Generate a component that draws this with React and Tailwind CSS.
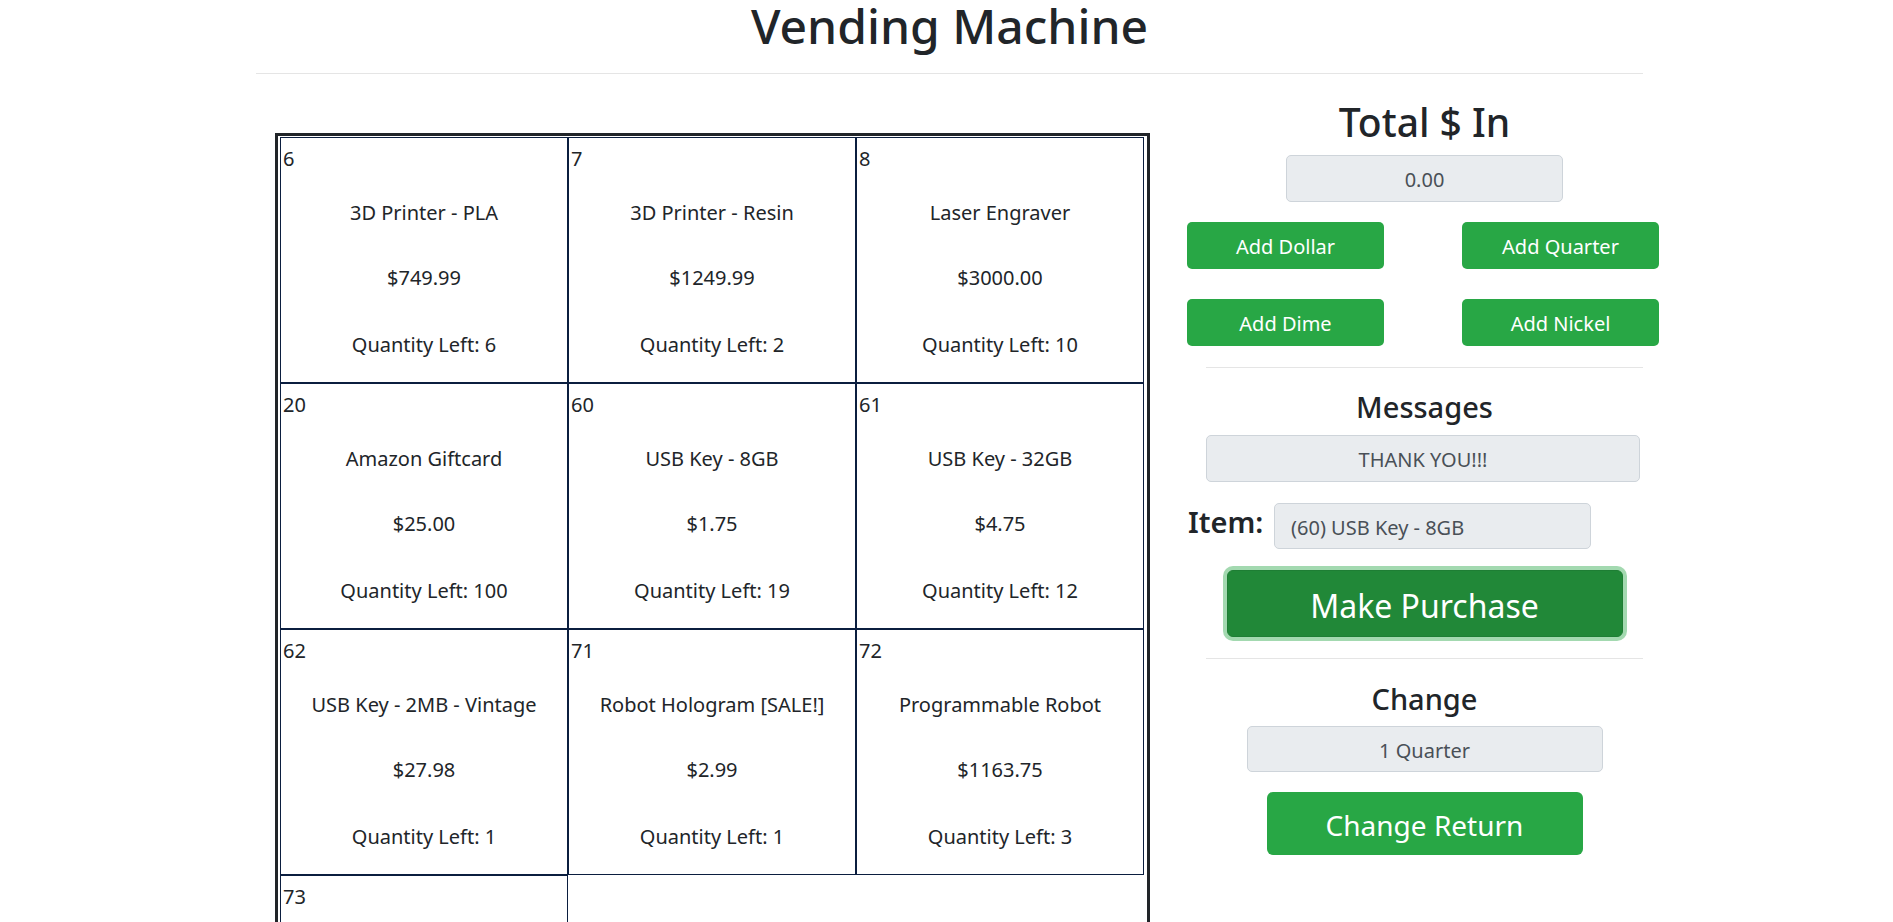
import React from 'react';

const items = [
    { id: 6, name: '3D Printer - PLA', price: '749.99', qty: 6 },
    { id: 7, name: '3D Printer - Resin', price: '1249.99', qty: 2 },
    { id: 8, name: 'Laser Engraver', price: '3000.00', qty: 10 },
    { id: 20, name: 'Amazon Giftcard', price: '25.00', qty: 100 },
    { id: 60, name: 'USB Key - 8GB', price: '1.75', qty: 19 },
    { id: 61, name: 'USB Key - 32GB', price: '4.75', qty: 12 },
    { id: 62, name: 'USB Key - 2MB - Vintage', price: '27.98', qty: 1 },
    { id: 71, name: 'Robot Hologram [SALE!]', price: '2.99', qty: 1 },
    { id: 72, name: 'Programmable Robot', price: '1163.75', qty: 3 },
    { id: 73, name: 'Robot Dog', price: '499.99', qty: 4 },
];

const ItemCell = ({ item }) => (
    <div className="w-[288px] h-[246px] border border-[#0b1e3f] flex flex-col">
        <div className="pl-[2px] mt-[6px] leading-[30px] h-[30px]">{item.id}</div>
        <div className="text-center mt-[24px] leading-[30px] h-[30px]">{item.name}</div>
        <div className="text-center mt-[35px] leading-[30px] h-[30px]">${item.price}</div>
        <div className="text-center mt-[37px] leading-[30px] h-[30px]">Quantity Left: {item.qty}</div>
    </div>
);

const ReadOnlyBox = ({ children, className = '' }) => (
    <div className={`bg-[#e9ecef] border border-[#ced4da] rounded-[5px] text-[#495057] text-[20px] pt-[3px] flex items-center ${className}`}>
        {children}
    </div>
);

const CoinButton = ({ label, className = '' }) => (
    <button className={`w-[197px] h-[47px] pt-[2px] rounded-[5px] bg-[#28a745] text-white text-[20px] ${className}`}>
        {label}
    </button>
);

export default function App() {
    return (
        <div className="min-h-screen bg-white text-[#212529] text-[20px] font-['Noto_Sans',sans-serif]">
            {/* Header */}
            <div className="ml-[256px] w-[1387px]">
                <h1 className="text-center text-[48px] font-medium leading-[52px]">Vending Machine</h1>
                <hr className="mt-[21px] border-0 border-t border-[#e5e5e5]" />
            </div>

            <div className="flex">
                {/* Items grid */}
                <div className="ml-[275px] mt-[59px]">
                    <div className="w-[875px] border-[3px] border-[#212529] pl-[2px] pt-[1px] flex flex-wrap">
                        {items.map((item) => (
                            <ItemCell key={item.id} item={item} />
                        ))}
                    </div>
                </div>

                {/* Controls */}
                <div className="ml-[37px] w-[475px] flex flex-col">
                    <h2 className="mt-[24px] text-center text-[39px] font-medium leading-[48px] h-[48px]">Total $ In</h2>
                    <ReadOnlyBox className="mt-[9px] mx-auto w-[277px] h-[47px] justify-center">0.00</ReadOnlyBox>

                    <div className="mt-[20px] flex">
                        <CoinButton label="Add Dollar" />
                        <CoinButton label="Add Quarter" className="ml-[78px]" />
                    </div>
                    <div className="mt-[30px] flex">
                        <CoinButton label="Add Dime" />
                        <CoinButton label="Add Nickel" className="ml-[78px]" />
                    </div>

                    <hr className="mt-[21px] mx-[19px] border-0 border-t border-[#e5e5e5]" />

                    <h4 className="mt-[21px] text-center text-[29px] font-medium leading-[36px] h-[36px]">Messages</h4>
                    <ReadOnlyBox className="mt-[10px] ml-[19px] mr-[22px] h-[47px] justify-center">THANK YOU!!!</ReadOnlyBox>

                    <div className="mt-[21px] flex items-start">
                        <label className="w-[87px] pl-[1px] pt-[1px] text-[29px] font-semibold leading-[36px]">Item:</label>
                        <ReadOnlyBox className="w-[317px] h-[46px] pl-[16px]">(60) USB Key - 8GB</ReadOnlyBox>
                    </div>

                    <button className="mt-[21px] mx-auto w-[396px] h-[67px] pt-[4px] rounded-[6px] bg-[#218838] border border-[#1e7e34] text-white text-[32px] shadow-[0_0_0_4px_rgba(72,180,97,0.5)]">
                        Make Purchase
                    </button>

                    <hr className="mt-[21px] mx-[19px] border-0 border-t border-[#e5e5e5]" />

                    <h4 className="mt-[22px] text-center text-[29px] font-medium leading-[36px] h-[36px]">Change</h4>
                    <ReadOnlyBox className="mt-[9px] mx-auto w-[356px] h-[46px] justify-center">1 Quarter</ReadOnlyBox>

                    <button className="mt-[20px] mx-auto w-[316px] h-[63px] pt-[3px] rounded-[6px] bg-[#28a745] text-white text-[28px]">
                        Change Return
                    </button>
                </div>
            </div>
        </div>
    );
}
